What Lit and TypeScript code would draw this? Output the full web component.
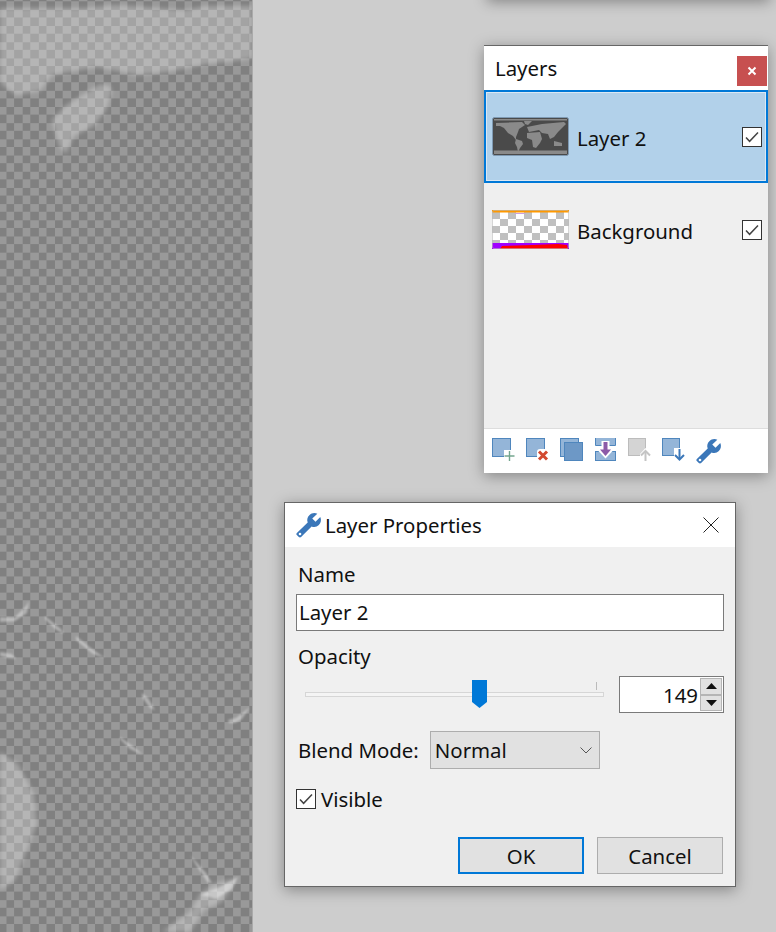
import {LitElement, css, html, svg} from 'lit';
import {customElement} from 'lit/decorators.js';

const wrench = (size: number) => html`
  <svg width=${size} height=${size} viewBox="0 0 24 24">
    <g transform="translate(24 0) scale(-1 1)">
      <path fill="#3b77b9" d="M23.2 19.3l-10-9.700c.9-2.300.4-5-1.500-6.700-2-2-5-2.400-7.400-1.300L9 6 6 9 1.600 4.700C.4 7.100.9 10.100 2.900 12.100c1.900 1.900 4.400 2.200 6.700 1.300l9.700 9.700c.6.600 1.500.6 2.100 0l1.800-1.800c.6-.6.6-1.500 0-2z"/>
      <circle cx="20.300" cy="20.300" r="1.200" fill="#fff"/>
    </g>
  </svg>`;

const check = html`
  <svg width="20" height="20" viewBox="0 0 20 20">
    <rect x="0.5" y="0.5" width="19" height="19" fill="#fff" stroke="#333"/>
    <path d="M4 10.500l3.600 3.800L16 5.500" fill="none" stroke="#444" stroke-width="1.500"/>
  </svg>`;

const square = (x: number, y: number, w: number, h: number) => svg`
  <rect x=${x + 0.5} y=${y + 0.5} width=${w} height=${h} fill="#94b5d8" stroke="#4f86bd"/>`;

// footer toolbar of the layers window
const toolIcons = [
  html`<svg width="24" height="24" viewBox="0 0 24 24">
    ${square(0, 0, 18, 18)}
    <rect x="12" y="12" width="11" height="11" fill="#fff"/>
    <path d="M17.500 13v10M12.500 18h10" stroke="#74a68f" stroke-width="1.400"/>
  </svg>`,
  html`<svg width="24" height="24" viewBox="0 0 24 24">
    ${square(0, 0, 18, 18)}
    <rect x="11" y="11" width="12" height="12" rx="3" fill="#fff"/>
    <path d="M13 13.500l8 8M21 13.500l-8 8" stroke="#d2492f" stroke-width="3"/>
  </svg>`,
  html`<svg width="24" height="24" viewBox="0 0 24 24">
    ${square(0, 0, 18, 18)}
    <rect x="4.500" y="4.500" width="18" height="18" fill="#6d98c6" stroke="#4f86bd"/>
  </svg>`,
  html`<svg width="24" height="24" viewBox="0 0 24 24">
    <path d="M.5 0v7.500h20V0" fill="#94b5d8" stroke="#4f86bd"/>
    <rect x=".5" y="13.500" width="20" height="9" fill="#94b5d8" stroke="#4f86bd"/>
    <path d="M10.500 3v12" stroke="#fff" stroke-width="8"/>
    <path d="M2.500 12l8 8.500 8-8.500z" fill="#fff"/>
    <path d="M10.500 4v10" stroke="#8c5aa8" stroke-width="4"/>
    <path d="M5 11.500l5.500 6.500 5.500-6.500z" fill="#8c5aa8"/>
  </svg>`,
  html`<svg width="24" height="24" viewBox="0 0 24 24">
    <rect x=".5" y=".5" width="17" height="17" fill="#d4d4d4" stroke="#bcbcbc"/>
    <path d="M12 24V16l5.500-6 5.500 6v8z" fill="#fff"/>
    <path d="M17.500 13v10" stroke="#c4c4c4" stroke-width="2"/>
    <path d="M13 17.500l4.500-4.500 4.500 4.500" fill="none" stroke="#c4c4c4" stroke-width="2"/>
  </svg>`,
  html`<svg width="24" height="24" viewBox="0 0 24 24">
    ${square(0, 0, 17, 17)}
    <rect x="12" y="10" width="11" height="13" fill="#fff"/>
    <path d="M17.500 11v10" stroke="#3b77b9" stroke-width="2"/>
    <path d="M13 17l4.500 4.500 4.500-4.500" fill="none" stroke="#3b77b9" stroke-width="2"/>
  </svg>`,
];

@customElement('layers-window')
export class LayersWindow extends LitElement {
  static styles = css`
    :host {
      position: absolute;
      left: 484px;
      top: 45px;
      width: 284px;
      height: 428px;
      display: flex;
      flex-direction: column;
      background: #efefef;
      border-top: 1px solid #666;
      box-shadow: 0 3px 14px rgba(0, 0, 0, 0.35);
      box-sizing: border-box;
    }
    .title {
      height: 44px;
      flex: none;
      display: flex;
      align-items: center;
      justify-content: space-between;
      background: #fff;
      padding: 0 1px 0 11px;
      box-sizing: border-box;
    }
    .close {
      width: 30px;
      height: 30px;
      margin-top: 6px;
      display: flex;
      align-items: center;
      justify-content: center;
      background: #c75050;
    }
    .row {
      height: 93px;
      flex: none;
      box-sizing: border-box;
      display: flex;
      align-items: center;
      gap: 8px;
      padding: 0 6px 0 8px;
    }
    .row.selected {
      background: #b2d1ea;
      border: 2px solid #0078d7;
      outline: 1px solid #dbe8f4;
      outline-offset: -3px;
      padding: 0 4px 0 6px;
    }
    .row span { flex: 1; padding-top: 2px; }
    .thumb {
      width: 77px;
      height: 39px;
      flex: none;
      display: block;
    }
    .spacer { flex: 1; }
    .tools {
      height: 45px;
      flex: none;
      display: flex;
      gap: 10px;
      padding: 9px 0 0 8px;
      box-sizing: border-box;
      background: #fff;
      border-top: 1px solid #ddd;
    }
    .tools svg:nth-child(4) { margin-left: 1px; margin-right: -1px; }
    svg { display: block; flex: none; }
  `;

  render() {
    return html`
      <div class="title">
        <span>Layers</span>
        <div class="close">
          <svg width="10" height="10" viewBox="0 0 10 10">
            <path d="M1.500 1.500l7 7M8.500 1.500l-7 7" stroke="#fff" stroke-width="2"/>
          </svg>
        </div>
      </div>
      <div class="row selected">
        <svg class="thumb" viewBox="0 0 77 39">
          <defs><filter id="mapblur"><feGaussianBlur stdDeviation=".45"/></filter></defs>
          <rect x=".5" y=".5" width="76" height="38" rx="2" fill="#4a4a4a" stroke="#7f9ab3"/>
          <g fill="#8a8a8a" filter="url(#mapblur)">
            <path d="M2 2h73v1.500H2z"/>
            <path d="M4 6l26-1 3 3-6 4-1 3-2 5v3l-3-4-5-3-4-5-4-2H4z"/>
            <path d="M32 4h8l-4 4-3-1z"/>
            <path d="M24 22l6 2 1 3-3 4-2 4-1-5-2-4z"/>
            <path d="M35 16l13-1 2 7-2 4-4 5-3-1-1-7-5-2z"/>
            <path d="M35 10l15-3 22-2 2 2-4 4-4 4-4 5-4 2-2-5-6-1-3-3-10 2z"/>
            <path d="M62 24l8 2v3h-8z"/>
            <path d="M2 33.500h73V37H2z"/>
          </g>
        </svg>
        <span>Layer 2</span>
        ${check}
      </div>
      <div class="row">
        <svg class="thumb" viewBox="0 0 77 39">
          <defs>
            <pattern id="thumbcheck" width="16" height="14" patternUnits="userSpaceOnUse" y="2">
              <rect width="16" height="14" fill="#fff"/>
              <rect width="8" height="7" fill="#c0c0c0"/>
              <rect x="8" y="7" width="8" height="7" fill="#c0c0c0"/>
            </pattern>
          </defs>
          <rect width="77" height="39" rx="1.500" fill="url(#thumbcheck)"/>
          <rect width="77" height="2.500" fill="#ff9900"/>
          <path d="M22 3h12l-2 1h-8z" fill="#c9a0e0"/>
          <rect y="33" width="77" height="6" fill="#a000ff"/>
          <path d="M8 39l2-3 30-1 26-1 9 1 1 4z" fill="#ff0000"/>
          <rect x=".5" y=".5" width="76" height="38" rx="1.500" fill="none" stroke="#bbb" stroke-opacity=".6"/>
        </svg>
        <span>Background</span>
        ${check}
      </div>
      <div class="spacer"></div>
      <div class="tools">${toolIcons}${wrench(26)}</div>
    `;
  }
}

@customElement('properties-dialog')
export class PropertiesDialog extends LitElement {
  static styles = css`
    :host {
      position: absolute;
      left: 284px;
      top: 502px;
      width: 452px;
      height: 385px;
      box-sizing: border-box;
      border: 1px solid #666;
      background: #f0f0f0;
      display: flex;
      flex-direction: column;
      box-shadow: 0 3px 14px rgba(0, 0, 0, 0.35);
    }
    .title {
      height: 44px;
      flex: none;
      background: #fff;
      display: flex;
      align-items: center;
      gap: 3px;
      padding: 0 16px 0 11px;
    }
    .title span { flex: 1; }
    .body {
      flex: 1;
      display: flex;
      flex-direction: column;
      padding: 13px 11px 12px 11px;
    }
    .label { padding-left: 2px; height: 34px; }
    .input {
      height: 37px;
      box-sizing: border-box;
      background: #fff;
      border: 1px solid #7a7a7a;
      padding-left: 2px;
      line-height: 35px;
    }
    .opacity-label { margin-top: 11px; }
    .slider-row {
      height: 37px;
      display: flex;
      align-items: center;
      justify-content: space-between;
    }
    .slider {
      position: relative;
      width: 299px;
      height: 5px;
      margin-left: 9px;
      background: #f4f4f4;
      border: 1px solid #d6d6d6;
      box-sizing: border-box;
    }
    .thumb { position: absolute; left: 166px; top: -13px; }
    .tick {
      position: absolute;
      right: 6px;
      top: -11px;
      width: 1px;
      height: 8px;
      background: #bbb;
    }
    .spin {
      width: 105px;
      height: 37px;
      box-sizing: border-box;
      background: #fff;
      border: 1px solid #7a7a7a;
      display: flex;
      justify-content: flex-end;
    }
    .spin span { flex: 1; text-align: right; line-height: 36px; padding-right: 2px; }
    .spin-buttons {
      width: 23px;
      display: flex;
      flex-direction: column;
      padding: 1px 1px 1px 0;
      box-sizing: border-box;
    }
    .spin-buttons div {
      flex: 1;
      background: #e1e1e1;
      border: 1px solid #b5b5b5;
      display: flex;
      align-items: center;
      justify-content: center;
    }
    .blend {
      display: flex;
      align-items: center;
      gap: 11px;
      margin-top: 18px;
      padding-left: 2px;
    }
    .select {
      width: 170px;
      height: 38px;
      box-sizing: border-box;
      background: #e1e1e1;
      border: 1px solid #adadad;
      display: flex;
      align-items: center;
      justify-content: space-between;
      padding: 0 7px 0 4px;
    }
    .visible {
      display: flex;
      align-items: center;
      gap: 5px;
      margin-top: 16px;
    }
    .buttons {
      display: flex;
      justify-content: flex-end;
      gap: 13px;
      margin-top: 24px;
      padding-right: 1px;
    }
    .button {
      width: 126px;
      height: 37px;
      box-sizing: border-box;
      background: #e1e1e1;
      border: 1px solid #adadad;
      display: flex;
      align-items: center;
      justify-content: center;
    }
    .button.default { border: 2px solid #0078d7; }
    svg { display: block; flex: none; }
  `;

  render() {
    return html`
      <div class="title">
        ${wrench(26)}
        <span>Layer Properties</span>
        <svg width="16" height="16" viewBox="0 0 16 16">
          <path d="M.5.500l15 15M15.500.500l-15 15" stroke="#222" stroke-width="1"/>
        </svg>
      </div>
      <div class="body">
        <div class="label">Name</div>
        <div class="input">Layer 2</div>
        <div class="label opacity-label">Opacity</div>
        <div class="slider-row">
          <div class="slider">
            <div class="tick"></div>
            <svg class="thumb" width="15" height="28" viewBox="0 0 15 28">
              <path d="M0 0h15v22l-7.500 6L0 22z" fill="#0078d7"/>
            </svg>
          </div>
          <div class="spin">
            <span>149</span>
            <div class="spin-buttons">
              <div><svg width="11" height="6" viewBox="0 0 11 6"><path d="M5.500 0L11 6H0z" fill="#111"/></svg></div>
              <div><svg width="11" height="6" viewBox="0 0 11 6"><path d="M5.500 6L11 0H0z" fill="#111"/></svg></div>
            </div>
          </div>
        </div>
        <div class="blend">
          <span>Blend Mode:</span>
          <div class="select">
            <span>Normal</span>
            <svg width="12" height="7" viewBox="0 0 12 7"><path d="M.5.500L6 6l5.500-5.500" fill="none" stroke="#555"/></svg>
          </div>
        </div>
        <div class="visible">${check}<span>Visible</span></div>
        <div class="buttons">
          <div class="button default">OK</div>
          <div class="button">Cancel</div>
        </div>
      </div>
    `;
  }
}

@customElement('app-root')
export class AppRoot extends LitElement {
  static styles = css`
    :host {
      display: block;
      position: relative;
      width: 776px;
      height: 932px;
      overflow: hidden;
      background: #cdcdcd;
      color: #111;
      font-family: "Noto Sans", "Open Sans", sans-serif;
      font-size: 20.400px;
    }
    .canvas {
      position: relative;
      width: 252px;
      height: 932px;
      border-right: 1px solid #aaa;
      background-color: #808080;
      background-image: conic-gradient(#999 25%, #808080 0 50%, #999 0 75%, #808080 0);
      background-size: 16.200px 16.200px;
      background-position: -2.100px 1.300px;
    }
    .canvas svg { position: absolute; inset: 0; }
    .top-panel {
      position: absolute;
      left: 487px;
      top: -20px;
      width: 283px;
      height: 20px;
      background: #efefef;
      box-shadow: 0 2px 14px rgba(0, 0, 0, 0.35);
    }
  `;

  render() {
    return html`
      <div class="canvas">
        <svg width="252" height="932" viewBox="0 0 252 932">
          <defs>
            <filter id="soft"><feGaussianBlur stdDeviation="2"/></filter>
            <filter id="softer"><feGaussianBlur stdDeviation=".8"/></filter>
          </defs>
          <g filter="url(#soft)" fill="#fff" fill-opacity=".28">
            <path d="M0 8h85l30-3 30 2 40 3 20-4h47v52l-10 2-35 4-40 8-30 3-40-8-45 8-12 16-24 4-14-10L0 78z"/>
            <path d="M100 84l-35 22-13 14 7 26 7 8 8-18 20-10 12-16 6-18-2-6z"/>
            <path d="M0 752l18 12 16 30 3 30-14 36-8 20-15 10z"/>
            <path d="M236 878l-22 6-14 10-10 18-28 20h28l14-22 18-8 8-12z"/>
          </g>
          <g filter="url(#softer)" fill="#fff" fill-opacity=".38">
            <path d="M0 617l14 1 12-12 3-5-2 12-12 8-15 1z"/>
            <path d="M45 616l16 13 3 5-9-5-10-10z"/>
            <path d="M76 636l16 13 13 9-12-4-17-14z"/>
            <path d="M142 693l6 5 7 12-5-2-8-11z"/>
            <path d="M120 737l14 10 9 8-13-6-10-10z"/>
            <path d="M228 720l8-2 14-11-8 12-7 4h-6z"/>
            <path d="M190 855l16 18 6 10-4 0-12-18z"/>
            <path d="M200 895l20-8 18-10-6 12-10 6-6 4-6-2z"/>
            <path d="M0 652l12 2 4 5-8-1-8-2z"/>
          </g>
        </svg>
      </div>
      <div class="top-panel"></div>
      <layers-window></layers-window>
      <properties-dialog></properties-dialog>
    `;
  }
}
